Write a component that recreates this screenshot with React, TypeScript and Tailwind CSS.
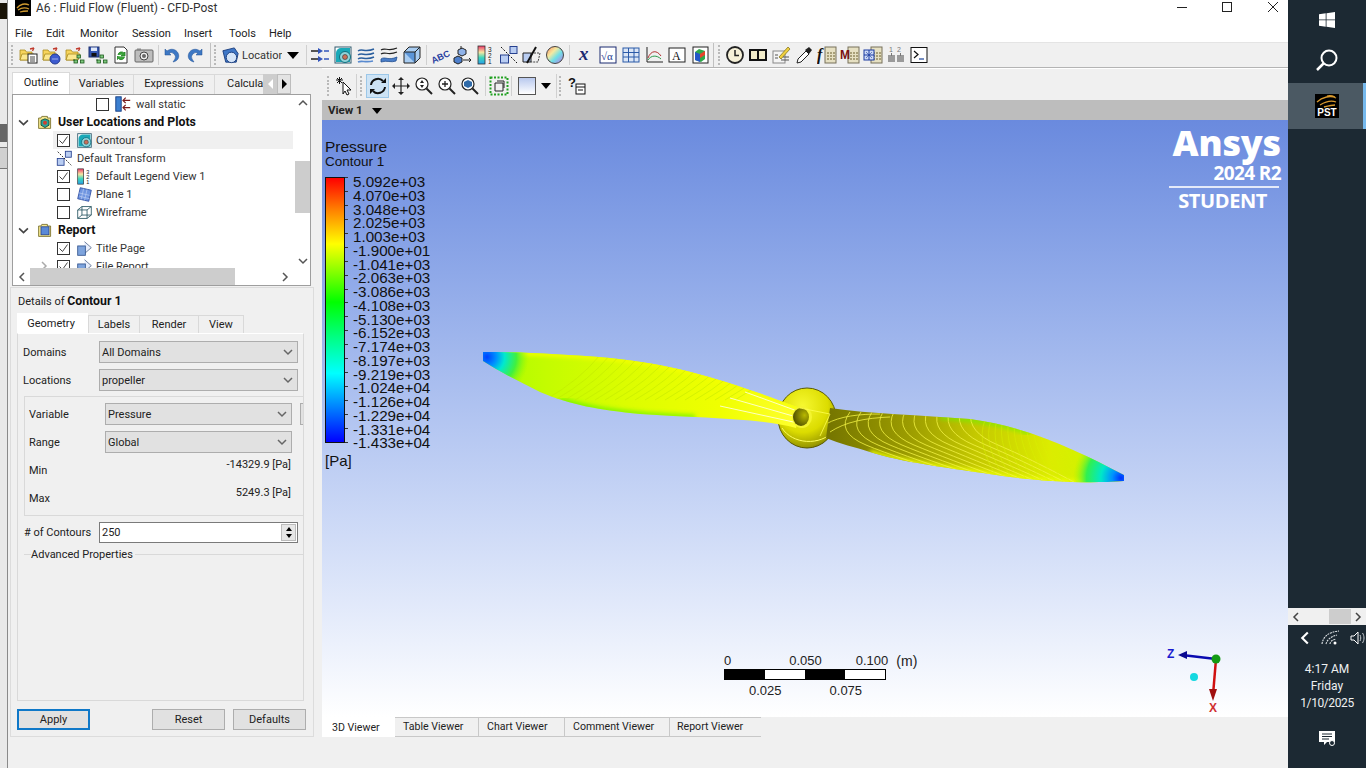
import type { ReactNode } from "react";

const Svg = ({ children, s = 20, c = "" }: { children: ReactNode; s?: number; c?: string }) => (
  <svg width={s} height={s} viewBox="0 0 20 20" className={c}>{children}</svg>
);

// toolbar cell
const T = ({ children }: { children: ReactNode }) => (
  <div className="w-[23px] h-[24px] flex items-center justify-center shrink-0">
    <Svg>{children}</Svg>
  </div>
);

const Grip = () => (
  <div className="w-[3px] h-[22px] flex flex-col justify-between py-[1px] shrink-0">
    {[0, 1, 2, 3, 4, 5].map((i) => <div key={i} className="w-[2px] h-[2px] bg-[#b9b9b9]" />)}
  </div>
);
const Sep = () => <div className="w-[1px] h-[20px] bg-[#d0d0d0] mx-[1px] shrink-0" />;

const Folder = () => (
  <>
    <path d="M1 5h5l1.5 2H13v8H1z" fill="#f7d45c" stroke="#a88a20" strokeWidth=".8" />
    <path d="M1 15l2-6h12l-2 6z" fill="#fce88f" stroke="#a88a20" strokeWidth=".8" />
    <path d="M11 4l4-1M15 3l-1.500 3" stroke="#c0392b" strokeWidth="1.300" fill="none" />
  </>
);
const Nodes = ({ x = 12, y = 10 }: { x?: number; y?: number }) => (
  <g fill="#7fc97f" stroke="#1d5a1d" strokeWidth=".8">
    <rect x={x} y={y} width="3.500" height="3" />
    <rect x={x + 3.500} y={y + 5} width="3.500" height="3" />
    <rect x={x - 3} y={y + 5} width="3.500" height="3" />
    <path d="M9 14v2" fill="none" />
  </g>
);
const Calc = ({ children }: { children: ReactNode }) => (
  <>
    <rect x="8" y="2" width="11" height="16" fill="#e6e0c2" stroke="#77705a" />
    <g fill="#a89f78">
      <rect x="10" y="7" width="2" height="2" /><rect x="13" y="7" width="2" height="2" /><rect x="16" y="7" width="2" height="2" />
      <rect x="10" y="10" width="2" height="2" /><rect x="13" y="10" width="2" height="2" /><rect x="16" y="10" width="2" height="2" />
      <rect x="10" y="13" width="2" height="2" /><rect x="13" y="13" width="2" height="2" /><rect x="16" y="13" width="2" height="2" />
    </g>
    {children}
  </>
);
const ContourIco = () => (
  <>
    <rect x="2" y="2" width="16" height="16" fill="#fff" stroke="#315b6e" />
    <path d="M3 17V8a5 5 0 0 1 5-5h9v14z" fill="#19a9b8" />
    <circle cx="12" cy="12" r="5.500" fill="#8fd3d9" stroke="#0f6f7f" />
    <circle cx="12" cy="12" r="2.500" fill="#c9705a" stroke="#333" strokeWidth=".6" />
  </>
);
const LegendIco = () => (
  <>
    <defs>
      <linearGradient id="lg" x1="0" y1="0" x2="0" y2="1">
        <stop offset="0" stopColor="#f03a6a" /><stop offset=".35" stopColor="#f5e6a2" /><stop offset=".65" stopColor="#3cd6bc" /><stop offset="1" stopColor="#2aa0e8" />
      </linearGradient>
    </defs>
    <rect x="2" y="1" width="7" height="18" fill="url(#lg)" stroke="#333" strokeWidth=".8" />
    <text x="12" y="6.500" fontSize="6.500" fill="#222" fontFamily="Liberation Sans">3</text>
    <text x="12" y="12.500" fontSize="6.500" fill="#222" fontFamily="Liberation Sans">2</text>
    <text x="12" y="18.500" fontSize="6.500" fill="#222" fontFamily="Liberation Sans">1</text>
  </>
);
const TransformIco = () => (
  <>
    <rect x="1.500" y="10" width="8" height="8" fill="#b9cdf2" stroke="#26408f" />
    <rect x="11" y="1.500" width="7" height="7" fill="#b9cdf2" stroke="#26408f" />
    <path d="M2 2l16 16" stroke="#111" strokeDasharray="2 1.500" />
  </>
);
const ReportIco = () => (
  <>
    <path d="M10 2l8 7-8 7" fill="#e8eefc" stroke="#5b6e8f" />
    <rect x="2" y="7" width="9" height="11" fill="#7ea4dd" stroke="#33558f" />
  </>
);
const BookFolder = ({ children }: { children: ReactNode }) => (
  <>
    <path d="M2 5h3l1-2h7v2h4v13H2z" fill="#f5e88e" stroke="#6e6420" />
    {children}
  </>
);
const Mag = ({ children }: { children?: ReactNode }) => (
  <>
    <circle cx="8" cy="8" r="6" fill="#fff" stroke="#222" strokeWidth="1.200" />
    <path d="M12.500 12.500l5.500 5.500" stroke="#222" strokeWidth="2" />
    {children}
  </>
);
const Check = ({ on }: { on?: boolean }) => (
  <div className="w-[13px] h-[13px] border border-[#333] bg-white flex items-center justify-center shrink-0">
    {on && (
      <svg width="11" height="11" viewBox="0 0 11 11">
        <path d="M1.500 5.500l3 3 5-7" fill="none" stroke="#444" strokeWidth="1" />
      </svg>
    )}
  </div>
);
const Chev = ({ d = "down", c = "#555", s = 10 }: { d?: string; c?: string; s?: number }) => (
  <svg width={s} height={s} viewBox="0 0 10 10" className="shrink-0">
    <path
      d={d === "down" ? "M1 3l4 4 4-4" : d === "up" ? "M1 7l4-4 4 4" : d === "left" ? "M7 1L3 5l4 4" : "M3 1l4 4-4 4"}
      fill="none" stroke={c} strokeWidth="1.500"
    />
  </svg>
);
const Tri = ({ c = "" }: { c?: string }) => <div className={`w-0 h-0 border-l-[5px] border-r-[5px] border-t-[6px] border-l-transparent border-r-transparent border-t-black ${c}`} />;

const Select = ({ w, label }: { w: string; label: string }) => (
  <div className={`${w} h-[22px] bg-[#e1e1e1] border border-[#adadad] flex items-center justify-between pl-[2px] pr-[4px] text-[#222]`}>
    <span>{label}</span>
    <Chev c="#666" />
  </div>
);

const Row = ({ pl, children, sel }: { pl: string; children: ReactNode; sel?: boolean }) => (
  <div className={`h-[18px] flex items-center shrink-0 ${pl} ${sel ? "bg-[#f0f0f0]" : ""}`}>{children}</div>
);

const legend = [
  "5.092e+03", "4.070e+03", "3.048e+03", "2.025e+03", "1.003e+03", "-1.900e+01", "-1.041e+03", "-2.063e+03", "-3.086e+03", "-4.108e+03",
  "-5.130e+03", "-6.152e+03", "-7.174e+03", "-8.197e+03", "-9.219e+03", "-1.024e+04", "-1.126e+04", "-1.229e+04", "-1.331e+04", "-1.433e+04",
];

const Propeller = () => {
  const right = "M830 408 C870 414 920 415 970 419 C1030 427 1080 452 1124 475 L1124 481 C1085 484 1040 481 1003 476 C950 468 900 462 870 452 C855 447 840 444 826 438 Z";
  const left = "M483 352 C520 352 560 354 610 358 C680 365 730 382 800 408 L796 428 C760 418 700 418 640 414 C600 410 570 405 540 392 C520 382 500 372 483 361 Z";
  return (
    <svg className="absolute left-0 top-0" width="966" height="597" viewBox="322 120 966 597">
      <defs>
        <linearGradient id="bl" gradientUnits="userSpaceOnUse" x1="483" y1="0" x2="800" y2="0">
          <stop offset="0" stopColor="#a8fb00" /><stop offset=".2" stopColor="#c4fc00" /><stop offset=".45" stopColor="#dcfd00" /><stop offset=".75" stopColor="#f0ff00" /><stop offset="1" stopColor="#ffff30" />
        </linearGradient>
        <linearGradient id="br" gradientUnits="userSpaceOnUse" x1="826" y1="0" x2="1124" y2="0">
          <stop offset="0" stopColor="#747400" /><stop offset=".28" stopColor="#9c9c00" /><stop offset=".5" stopColor="#c4c800" />
          <stop offset=".75" stopColor="#dcec00" /><stop offset="1" stopColor="#c8f800" />
        </linearGradient>
        <radialGradient id="tipL" gradientUnits="userSpaceOnUse" cx="487" cy="357" r="42">
          <stop offset="0" stopColor="#0040ff" /><stop offset=".22" stopColor="#0090ff" /><stop offset=".42" stopColor="#00e8d0" /><stop offset=".7" stopColor="#40f040" /><stop offset="1" stopColor="#90f800" stopOpacity="0" />
        </radialGradient>
        <radialGradient id="tipR" gradientUnits="userSpaceOnUse" cx="1121" cy="478" r="48">
          <stop offset="0" stopColor="#0030ff" /><stop offset=".18" stopColor="#0090ff" /><stop offset=".42" stopColor="#00e8c8" /><stop offset=".72" stopColor="#30f050" /><stop offset="1" stopColor="#a0f800" stopOpacity="0" />
        </radialGradient>
        <radialGradient id="hub" cx=".42" cy=".3" r=".8">
          <stop offset="0" stopColor="#f6f830" /><stop offset=".55" stopColor="#dcdc00" /><stop offset=".85" stopColor="#9a9a00" /><stop offset="1" stopColor="#5c5c00" />
        </radialGradient>
        <radialGradient id="hole" cx=".72" cy=".4" r=".85">
          <stop offset="0" stopColor="#b8b800" /><stop offset="1" stopColor="#3c3c00" />
        </radialGradient>
        <filter id="soft"><feGaussianBlur stdDeviation="2" /></filter>
        <clipPath id="cr"><path d={right} /></clipPath>
        <clipPath id="cl"><path d={left} /></clipPath>
      </defs>
      <ellipse cx="807" cy="418" rx="29" ry="30" fill="url(#hub)" stroke="#5a5a00" strokeWidth="1" />
      <path d="M782 428 C792 444 820 447 835 430" fill="none" stroke="#ffff60" strokeWidth="1" />
      <path d={left} fill="url(#bl)" />
      <g clipPath="url(#cl)">
        {/* green band along the trailing edge, yellow rim on top */}
        <path d="M560 400 C590 409 610 411 640 414 C660 416 675 416 695 417" fill="none" stroke="#40f000" strokeOpacity=".6" strokeWidth="5" filter="url(#soft)" />
        <path d="M483 352 C520 352 560 354 610 358 C680 365 730 382 800 408" fill="none" stroke="#f4ff00" strokeWidth="5" filter="url(#soft)" />
        <g fill="none" stroke="#bce400" strokeWidth=".5">
          {Array.from({ length: 20 }, (_, i) => (
            <path key={i} d={`M${545 + i * 10} 400 Q${580 + i * 10} 380 ${600 + i * 10} 355`} />
          ))}
        </g>
        <path d="M745 392L800 412M730 398L800 418M720 406L798 423" fill="none" stroke="#fffff0" strokeWidth=".8" />
        <rect x="480" y="345" width="50" height="40" fill="url(#tipL)" />
      </g>
      <path d={right} fill="url(#br)" />
      <g clipPath="url(#cr)">
        <path d="M940 417 C970 419 1005 424 1030 433" fill="none" stroke="#70f000" strokeOpacity=".7" strokeWidth="5" filter="url(#soft)" />
        <path d="M1124 481 C1085 484 1040 481 1003 476 C950 468 900 462 870 452" fill="none" stroke="#ecff00" strokeWidth="5" filter="url(#soft)" />
        <g fill="none" stroke="#f2f244" strokeWidth=".8">
          {Array.from({ length: 12 }, (_, i) => (
            <path key={i} d={`M${850 + i * 11} 412 Q${835 + i * 12} 432 ${866 + i * 12} 445 T${975 + i * 9} 482`} />
          ))}
          <path d="M826 424C840 416 860 414 880 414M830 432C845 422 865 418 890 417" />
        </g>
        <g fill="none" stroke="#d8f000" strokeWidth=".5">
          {Array.from({ length: 16 }, (_, i) => (
            <path key={i} d={`M${985 + i * 6} 420 Q${975 + i * 7} 445 ${1000 + i * 7} 482`} />
          ))}
        </g>
        <rect x="1070" y="445" width="56" height="40" fill="url(#tipR)" />
      </g>
      <ellipse cx="802" cy="417" rx="10" ry="11" fill="#f4f430" />
      <ellipse cx="801" cy="417" rx="8" ry="9" fill="url(#hole)" />
      <path d="M800 408l30 6-10 22" fill="none" stroke="#ffff50" strokeWidth=".8" />
    </svg>
  );
};

export default function App() {
  return (
    <div className="w-[1366px] h-[768px] flex overflow-hidden bg-[#f0f0f0] text-[11px] leading-none text-[#222] font-['Roboto',sans-serif]">
      {/* desktop strip behind the window */}
      <div className="w-[7px] flex flex-col bg-[#e9e9e9] border-r border-[#8a8a8a] shrink-0 box-content">
        <div className="h-[3px]" />
        <div className="h-[16px] bg-[#1a1408]" />
        <div className="h-[105px]" />
        <div className="h-[18px] bg-[#666]" />
        <div className="h-[5px]" />
        <div className="h-[22px] bg-[#d0d0d0] border-y border-[#777]" />
      </div>

      {/* CFD-Post window */}
      <div className="w-[1280px] flex flex-col shrink-0">
        {/* title bar */}
        <div className="h-[22px] bg-white flex items-start relative">
          <div className="ml-[7px] w-[16px] h-[16px] bg-black flex items-center justify-center shrink-0">
            <svg width="14" height="12" viewBox="0 0 14 12"><path d="M1 6c3-4 8-5 12-3M2 8c3-2 7-3 11-1M4 10c3-1 6-1 8-1" fill="none" stroke="#d09a30" strokeWidth="1.300" /></svg>
          </div>
          <span className="ml-[5px] mt-[2px] text-[12px] leading-[13px] text-[#333]">A6 : Fluid Flow (Fluent) - CFD-Post</span>
          <svg className="absolute left-[1169px] top-0" width="113" height="14" viewBox="0 0 113 14">
            <path d="M0 7.500h10" stroke="#222" />
            <rect x="45.500" y="2.500" width="9" height="9" fill="none" stroke="#222" />
            <path d="M91 2l10 10M101 2L91 12" stroke="#222" />
          </svg>
        </div>

        {/* menu */}
        <div className="h-[20px] bg-white pl-[7px] flex items-center text-[11px] pt-[2px]">
          <span className="w-[31px]">File</span>
          <span className="w-[34px]">Edit</span>
          <span className="w-[52px]">Monitor</span>
          <span className="w-[52px]">Session</span>
          <span className="w-[45px]">Insert</span>
          <span className="w-[40px]">Tools</span>
          <span>Help</span>
        </div>

        {/* main toolbar */}
        <div className="h-[26px] bg-[#f0f0f0] border-t border-[#e4e4e4] border-b border-b-[#b4b4b4] flex items-center pl-[3px] shrink-0">
          <Grip />
          <div className="w-[3px]" />
          <T><Folder /><rect x="9" y="9" width="9" height="9" fill="#fff" stroke="#222" /><path d="M11 12h5M11 14h5M11 16h5" stroke="#444" /></T>
          <T><Folder /><circle cx="13" cy="14" r="5" fill="#3d5bd0" stroke="#223a90" /><path d="M10.500 14h1M12.500 14h1M14.500 14h1" stroke="#fff" /></T>
          <T><Folder /><Nodes /></T>
          <T><rect x="1" y="2" width="10" height="10" fill="#3557b0" stroke="#1b2f70" /><rect x="3" y="2.500" width="6" height="3.500" fill="#dfe8f8" /><rect x="3.500" y="8" width="5" height="3.500" fill="#111" /><Nodes /></T>
          <T><path d="M4 2h9l3 3v13H4z" fill="#fff" stroke="#333" /><path d="M7 10a3.500 3.500 0 0 1 6-2l1-1v4h-4l1.500-1.200M13.500 12a3.500 3.500 0 0 1-6 1.500l-1 1v-3.500" fill="#3aa53a" stroke="#1e7d1e" strokeWidth=".8" /></T>
          <T><rect x="1" y="5" width="18" height="12" rx="1" fill="#bdbdbd" stroke="#666" /><circle cx="10" cy="11" r="4" fill="#eee" stroke="#444" /><circle cx="10" cy="11" r="2" fill="#666" /><rect x="3" y="3.500" width="4" height="2" fill="#888" /></T>
          <div className="w-[2px]" />
          <Sep />
          <div className="w-[2px]" />
          <T><path transform="translate(-3 0)" d="M4 4v6h6L8 8a4.500 4.500 0 0 1 6 6l-2 3c5-1 7-5 5-9-2-4-7-5-11-2z" fill="#3d78c4" stroke="#1f4f92" strokeWidth=".5" /></T>
          <T><path transform="translate(-1 0)" d="M16 4v6h-6l2-2a4.500 4.500 0 0 0-6 6l2 3c-5-1-7-5-5-9 2-4 7-5 11-2z" fill="#3d78c4" stroke="#1f4f92" strokeWidth=".5" /></T>
          <div className="w-[1px] h-[24px] bg-[#c0c0c0] ml-[2px] mr-[3px]" />
          <Grip />
          <div className="ml-[3px] w-[20px] h-[24px] flex items-center justify-center shrink-0">
            <Svg s={19}><path d="M2 5l12-3 4 6-2 9H5z" fill="#3f78c8" stroke="#1c3f80" /><circle cx="11" cy="12" r="5.500" fill="#d4e4f8" stroke="#1c3f80" /></Svg>
          </div>
          <span className="ml-[2px] w-[40px] overflow-hidden whitespace-nowrap text-[#333]">Location</span>
          <Tri c="ml-[5px] !border-l-[6px] !border-r-[6px] !border-t-[7px]" />
          <div className="w-[6px]" />
          <Sep />
          <T><path d="M1 6h8M1 14h8" stroke="#222" strokeWidth="1.300" /><path d="M8 3l5 3-5 3zM8 11l5 3-5 3z" fill="#3355bb" /><path d="M14 6h5M14 14h5" stroke="#3355bb" strokeWidth="1.300" /></T>
          <T><ContourIco /></T>
          <T><path d="M2 6c4-3 7 2 16-2M2 10c4-3 7 2 16-2M2 14c4-3 7 2 16-2" fill="none" stroke="#2b5f9e" strokeWidth="1.400" /><path d="M2 17c4-2 7 1 15-1" fill="none" stroke="#5a8bd0" strokeWidth="1.600" /></T>
          <T><path d="M2 5c4-3 7 2 16-2M2 9c4-3 7 2 16-2" fill="none" stroke="#222" strokeWidth="1.200" /><path d="M2 14c4-3 7 2 16-2l-1 4c-5 2-9-1-15 1z" fill="#4a7ec8" stroke="#224f90" strokeWidth=".8" /></T>
          <T><path d="M2 7l5-5h11v11l-5 5H2z" fill="#a9cdf2" stroke="#222" /><path d="M2 7h11v11M13 7l5-5" fill="#5b95d8" stroke="#222" /></T>
          <div className="w-[2px]" />
          <Sep />
          <T><text x="0" y="15" fontSize="9" fontWeight="700" fill="#2940a0" fontFamily="Liberation Sans" transform="rotate(-24 10 10)">ABC</text></T>
          <T><path d="M5 5l4-2 4 2v4l-4 2-4-2z" fill="#8fb2e8" stroke="#222" /><path d="M1 13l4-2 4 2v4l-4 2-4-2z" fill="#4f80cc" stroke="#222" /><path d="M10 15h8M16 13l2 2-2 2M8 1v3" stroke="#222" fill="none" /></T>
          <T><LegendIco /></T>
          <T><TransformIco /></T>
          <T><path d="M1 8h8v9H1z" fill="#b9cdf2" stroke="#222" /><path d="M9 8h9l-2 9H9" fill="none" stroke="#444" strokeDasharray="2 1" /><path d="M5 18L14 2" stroke="#111" strokeWidth="2" /></T>
          <T><defs><linearGradient id="wh" x1="0" y1="0" x2="1" y2="1"><stop offset="0" stopColor="#ff8a5c" /><stop offset=".35" stopColor="#f5e9a0" /><stop offset=".6" stopColor="#6fe0e8" /><stop offset="1" stopColor="#c070e0" /></linearGradient></defs><circle cx="10" cy="10" r="8.500" fill="url(#wh)" stroke="#444" /></T>
          <div className="w-[2px]" />
          <Sep />
          <div className="w-[2px]" />
          <T><text x="4" y="15" fontSize="19" fontStyle="italic" fontWeight="700" fill="#1a2a70" fontFamily="Liberation Serif">x</text></T>
          <T><rect x="2" y="2" width="16" height="16" fill="#fff" stroke="#1a2a70" /><text x="3" y="15" fontSize="11" fill="#1a3a90" fontFamily="Liberation Serif">√α</text></T>
          <T><rect x="2" y="3" width="16" height="14" fill="#dbe6f6" stroke="#2b5aa8" /><path d="M2 7.500h16M2 12h16M7.500 3v14M13 3v14" stroke="#2b5aa8" /></T>
          <T><path d="M3 2v15h16" fill="none" stroke="#222" /><path d="M4 13c3-8 9-8 13-2" fill="none" stroke="#b03030" /><path d="M4 15c3-5 9-5 13-1" fill="none" stroke="#2a9a4a" /></T>
          <T><rect x="2" y="3" width="16" height="14" fill="#fff" stroke="#222" /><text x="5" y="15" fontSize="12" fontFamily="Liberation Serif" fill="#111">A</text></T>
          <T><rect x="3" y="2" width="15" height="16" fill="#fff" stroke="#222" /><path d="M5 7l4-3 6 2v8l-4 3-6-2z" fill="#2ea84a" /><path d="M5 7l5 2v8l-5-2z" fill="#2356c8" /><path d="M10 9l5-3v4l-5 3z" fill="#e8442a" /></T>
          <div className="w-[1px] h-[24px] bg-[#c0c0c0] ml-[2px] mr-[4px]" />
          <Grip />
          <div className="w-[2px]" />
          <T><circle cx="10" cy="10" r="8" fill="#f5f0d8" stroke="#222" strokeWidth="1.800" /><path d="M10 5v5.500h4" fill="none" stroke="#222" strokeWidth="1.500" /></T>
          <T><rect x="1" y="4" width="18" height="12" fill="#111" /><rect x="3" y="6" width="6" height="8" fill="#f2ecca" /><rect x="11" y="6" width="6" height="8" fill="#f2ecca" /></T>
          <T><rect x="2" y="6" width="12" height="12" fill="#f4f4f4" stroke="#888" /><path d="M8 12L17 2l2 2-9 10z" fill="#f0d040" stroke="#7a6a10" strokeWidth=".7" /><path d="M10 15h8M12 12h6M4 10h3M4 13h3" stroke="#555" /></T>
          <T><path d="M3 18l1-4 8-8 3 3-8 8z" fill="#fff" stroke="#222" /><path d="M11 5l4-3 3 3-3 4z" fill="#222" /></T>
          <T><Calc><text x="0" y="15" fontSize="16" fontWeight="700" fontStyle="italic" fontFamily="Liberation Serif" fill="#111">f</text></Calc></T>
          <T><Calc><text x="0" y="14" fontSize="12" fontWeight="700" fontFamily="Liberation Sans" fill="#7a1010">M</text></Calc></T>
          <T><Calc><rect x="1" y="5" width="10" height="10" fill="#cdd9f5" stroke="#1a3aa0" /><path d="M1 10h10M6 5v10" stroke="#1a3aa0" /><path d="M3 7l6 6M9 7l-6 6" stroke="#1a3aa0" strokeWidth=".6" /></Calc></T>
          <T><text x="3" y="7" fontSize="7" fill="#777" fontFamily="Liberation Sans">1</text><text x="11" y="7" fontSize="7" fill="#777" fontFamily="Liberation Sans">2</text><path d="M2 10h7v7H2zM11 10h7v7h-7z" fill="#9a9a9a" /><path d="M5.500 8v3M14.500 8v3" stroke="#777" /></T>
          <T><rect x="2" y="2.500" width="16" height="15" fill="#fff" stroke="#111" /><path d="M5 6l4 3.500-4 3.500" fill="none" stroke="#111" strokeWidth="1.200" /><path d="M10 14h5" stroke="#2a50a0" strokeWidth="1.300" /></T>
        </div>

        {/* panels */}
        <div className="flex-1 flex min-h-0">
          {/* left column */}
          <div className="w-[304px] ml-[2px] flex flex-col shrink-0">
            <div className="h-[4px]" />
            {/* outline tabs */}
            <div className="h-[22px] ml-[2px] flex items-end shrink-0 relative">
              <div className="w-[58px] h-[22px] pb-[2px] bg-white border border-[#d9d9d9] border-b-0 flex items-center justify-center">Outline</div>
              <div className="w-[64px] h-[20px] pb-[2px] bg-[#f0f0f0] border-t border-r border-[#d9d9d9] flex items-center justify-center">Variables</div>
              <div className="w-[81px] h-[20px] pb-[2px] bg-[#f0f0f0] border-t border-r border-[#d9d9d9] flex items-center justify-center">Expressions</div>
              <div className="w-[48px] h-[20px] pb-[2px] bg-[#f0f0f0] border-t border-[#d9d9d9] pl-[12px] flex items-center overflow-hidden whitespace-nowrap">Calcula</div>
              <div className="flex h-[20px] shrink-0">
                <div className="w-[14px] bg-[#cdcdcd] flex items-center justify-center"><div className="w-0 h-0 border-y-[5px] border-r-[5px] border-y-transparent border-r-white" /></div>
                <div className="w-[14px] bg-[#e3e3e3] border border-[#bdbdbd] flex items-center justify-center"><div className="w-0 h-0 border-y-[5px] border-l-[5px] border-y-transparent border-l-black" /></div>
              </div>
            </div>

            {/* outline tree */}
            <div className="h-[192px] ml-[2px] w-[299px] border border-[#9e9e9e] bg-white flex flex-col shrink-0">
              <div className="flex h-[173px] shrink-0">
                <div className="w-[282px] overflow-hidden flex flex-col shrink-0">
                  <Row pl="pl-[83px]"><Check /><Svg s={18} c="ml-[5px]"><rect x="2" y="2" width="6" height="16" fill="#3b7fd0" stroke="#123a80" /><path d="M10 6h8M10 14h8M13 3l-3 3 3 3M13 11l-3 3 3 3" fill="none" stroke="#7a1a1a" strokeWidth="1.300" /></Svg><span className="ml-[4px] text-[#333]">wall static</span></Row>
                  <Row pl="pl-[5px]"><Chev s={11} c="#444" /><Svg s={16} c="ml-[8px]"><BookFolder><path d="M5 8l5-2 5 2v6l-5 3-5-3z" fill="#2aa59a" stroke="#0c3c30" /><circle cx="10" cy="11" r="2.500" fill="#d04030" /></BookFolder></Svg><span className="ml-[5px] text-[12.300px] font-bold text-[#111]">User Locations and Plots</span></Row>
                  <div className="ml-[40px] mr-[2px] flex flex-col">
                    <Row pl="pl-[4px]" sel><Check on /><Svg s={17} c="ml-[6px]"><ContourIco /></Svg><span className="ml-[3px] text-[#333]">Contour 1</span></Row>
                    <Row pl="pl-[3px]"><Svg s={17}><TransformIco /></Svg><span className="ml-[4px] text-[#333]">Default Transform</span></Row>
                    <Row pl="pl-[4px]"><Check on /><Svg s={17} c="ml-[6px]"><LegendIco /></Svg><span className="ml-[3px] text-[#333]">Default Legend View 1</span></Row>
                    <Row pl="pl-[4px]"><Check /><Svg s={17} c="ml-[6px]"><path d="M5 2l13 3-3 13L2 15z" fill="#6f95e0" stroke="#2a4aa0" /><path d="M3 8l13 3M4 12l12 3M9 3l-3 13M13 4l-3 13" stroke="#c5d4f5" strokeWidth=".7" /></Svg><span className="ml-[3px] text-[#333]">Plane 1</span></Row>
                    <Row pl="pl-[4px]"><Check /><Svg s={17} c="ml-[6px]"><path d="M2 7h11v10H2zM7 3h11v10H7zM2 7l5-4M13 7l5-4M2 17l5-4M13 17l5-4" fill="none" stroke="#275561" /></Svg><span className="ml-[3px] text-[#333]">Wireframe</span></Row>
                  </div>
                  <Row pl="pl-[5px]"><Chev s={11} c="#444" /><Svg s={16} c="ml-[8px]"><BookFolder><rect x="5" y="6" width="10" height="10" fill="#5a8ad8" stroke="#243f90" /></BookFolder></Svg><span className="ml-[5px] text-[12.300px] font-bold text-[#111]">Report</span></Row>
                  <div className="ml-[40px] flex flex-col">
                    <Row pl="pl-[4px]"><Check on /><Svg s={17} c="ml-[6px]"><ReportIco /></Svg><span className="ml-[3px] text-[#333]">Title Page</span></Row>
                    <Row pl="pl-[4px] relative"><div className="absolute left-[-14px]"><Chev c="#aaa" d="right" /></div><Check on /><Svg s={17} c="ml-[6px]"><ReportIco /></Svg><span className="ml-[3px] text-[#333]">File Report</span></Row>
                  </div>
                </div>
                <div className="w-[15px] flex flex-col items-center shrink-0 bg-white">
                  <div className="h-[15px] flex items-center justify-center"><Chev c="#555" d="up" /></div>
                  <div className="h-[51px]" />
                  <div className="w-[15px] h-[52px] bg-[#cdcdcd]" />
                  <div className="flex-1" />
                  <div className="h-[15px] flex items-center justify-center"><Chev c="#555" /></div>
                </div>
              </div>
              <div className="h-[17px] flex items-center bg-white shrink-0">
                <div className="w-[17px] flex justify-center"><Chev d="left" c="#555" /></div>
                <div className="w-[205px] h-[17px] bg-[#cdcdcd]" />
                <div className="w-[56px] flex justify-center pl-[44px]"><Chev d="right" c="#555" /></div>
              </div>
            </div>

            {/* details */}
            <div className="mt-[1px] h-[450px] border border-[#dcdcdc] flex flex-col shrink-0">
              <div className="h-[25px] pl-[7px] pt-[7px] shrink-0">Details of <span className="text-[12.300px] font-bold text-[#111]">Contour 1</span></div>
              <div className="h-[20px] pl-[6px] flex items-end shrink-0">
                <div className="w-[71px] h-[20px] bg-white pr-[3px] flex items-center justify-center">Geometry</div>
                <div className="w-[52px] h-[18px] border-t border-r border-l border-[#d9d9d9] flex items-center justify-center">Labels</div>
                <div className="w-[59px] h-[18px] border-t border-r border-[#d9d9d9] flex items-center justify-center">Render</div>
                <div className="w-[45px] h-[18px] border-t border-r border-[#d9d9d9] flex items-center justify-center">View</div>
              </div>
              <div className="mx-[6px] w-[287px] h-[368px] border border-[#d9d9d9] border-t-white bg-[#f0f0f0] flex flex-col shrink-0 overflow-hidden">
                <div className="h-[7px] shrink-0" />
                <div className="flex items-center h-[22px] pl-[5px] shrink-0"><span className="w-[76px]">Domains</span><Select w="w-[199px]" label="All Domains" /></div>
                <div className="h-[6px] shrink-0" />
                <div className="flex items-center h-[22px] pl-[5px] shrink-0"><span className="w-[76px]">Locations</span><Select w="w-[199px]" label="propeller" /></div>
                <div className="h-[5px] shrink-0" />
                <div className="ml-[6px] w-[290px] h-[120px] border border-[#d9d9d9] pl-[4px] pt-[6px] flex flex-col shrink-0">
                  <div className="flex items-center h-[22px]"><span className="w-[76px]">Variable</span><Select w="w-[187px]" label="Pressure" /><div className="ml-[8px] w-[10px] h-[22px] bg-[#e1e1e1] border border-[#adadad]" /></div>
                  <div className="h-[6px]" />
                  <div className="flex items-center h-[22px]"><span className="w-[76px]">Range</span><Select w="w-[187px]" label="Global" /></div>
                  <div className="flex h-[28px] w-[262px] justify-between"><span className="mt-[12px]">Min</span><span className="mt-[6px]">-14329.9 [Pa]</span></div>
                  <div className="flex h-[28px] w-[262px] justify-between"><span className="mt-[12px]">Max</span><span className="mt-[6px]">5249.3 [Pa]</span></div>
                </div>
                <div className="h-[6px] shrink-0" />
                <div className="flex items-center h-[21px] pl-[6px] shrink-0">
                  <span className="w-[75px] whitespace-nowrap">{"# of Contours"}</span>
                  <div className="w-[199px] h-[21px] bg-white border border-[#7a7a7a] flex items-center justify-between pl-[2px] pr-[1px]">
                    <span>250</span>
                    <div className="w-[15px] h-[17px] flex flex-col border border-[#bbb] bg-[#e6e6e6] items-center justify-around">
                      <div className="w-0 h-0 border-x-[3px] border-b-[4px] border-x-transparent border-b-black" />
                      <div className="w-0 h-0 border-x-[3px] border-t-[4px] border-x-transparent border-t-black" />
                    </div>
                  </div>
                </div>
                <div className="ml-[6px] mt-[5px] w-[290px] h-[13px] flex items-center shrink-0">
                  <div className="w-[7px] h-[1px] bg-[#d9d9d9]" />
                  <span className="whitespace-nowrap">Advanced Properties</span>
                  <div className="flex-1 h-[1px] bg-[#d9d9d9] ml-[2px]" />
                </div>
              </div>
              <div className="h-[8px] shrink-0" />
              <div className="h-[21px] flex pl-[6px] shrink-0">
                <div className="w-[73px] h-[21px] bg-[#e1e1e1] border-2 border-[#0f78c8] flex items-center justify-center">Apply</div>
                <div className="ml-[62px] w-[73px] h-[21px] bg-[#e1e1e1] border border-[#adadad] flex items-center justify-center">Reset</div>
                <div className="ml-[8px] w-[73px] h-[21px] bg-[#e1e1e1] border border-[#adadad] flex items-center justify-center">Defaults</div>
              </div>
            </div>
          </div>

          {/* right column */}
          <div className="ml-[8px] w-[966px] flex flex-col shrink-0">
            <div className="h-[32px] pt-[3px] border-t-[1px] border-white flex items-center pl-[5px] shrink-0">
              <Grip />
              <div className="ml-[2px]">
                <T><path d="M9 6l8 8-4 0 2 4-2 1-2-4-2 3z" fill="#fff" stroke="#111" /><path d="M2 4h7M5.500 1v7M3 2l5 5M8 2L3 7" stroke="#111" strokeWidth="1" /></T>
              </div>
              <div className="w-[1px] h-[24px] bg-[#d0d0d0] ml-[1px]" />
              <div className="w-[3px]" />
              <Grip />
              <div className="w-[3px]" />
              <div className="w-[23px] h-[24px] bg-[#cde3f5] border border-[#9cc7e8] flex items-center justify-center shrink-0">
                <Svg><path d="M3 9a7 7 0 0 1 12-4" fill="none" stroke="#111" strokeWidth="2" /><path d="M17 11a7 7 0 0 1-12 4" fill="none" stroke="#111" strokeWidth="2" /><path d="M13 7l5 0 0-5zM7 13l-5 0 0 5z" fill="#111" /></Svg>
              </div>
              <T><path d="M10 2v16M2 10h16" stroke="#222" strokeWidth="1.200" /><path d="M10 1l-3 3h6zM10 19l-3-3h6zM1 10l3-3v6zM19 10l-3-3v6z" fill="#222" /></T>
              <T><Mag><path d="M8 4l-2 3h4zM8 12l-2-3h4z" fill="#222" /></Mag></T>
              <T><Mag><path d="M8 5v6M5 8h6" stroke="#222" strokeWidth="1.300" /></Mag></T>
              <T><Mag><path d="M4 6l4-2 4 2v4l-4 2-4-2z" fill="#2f6aa8" /></Mag></T>
              <div className="w-[3px]" />
              <Sep />
              <T><path d="M6 7h8v8H6zM8 5h7v7" fill="none" stroke="#222" /><rect x="1.500" y="1.500" width="17" height="17" fill="none" stroke="#22a022" strokeWidth="2" strokeDasharray="2 1.500" /></T>
              <Sep />
              <div className="w-[5px]" />
              <div className="w-[18px] h-[18px] border border-[#555] bg-gradient-to-b from-[#b9c9ee] to-white shrink-0" />
              <Tri c="ml-[5px] !border-l-[5px] !border-r-[5px]" />
              <div className="w-[5px]" />
              <div className="w-[1px] h-[24px] bg-[#d0d0d0]" />
              <div className="w-[2px]" />
              <Grip />
              <div className="w-[3px]" />
              <T><text x="1" y="11" fontSize="13" fontWeight="700" fill="#111" fontFamily="Liberation Sans">?</text><rect x="9" y="8" width="9" height="10" fill="#fff" stroke="#111" /><path d="M9 11h9M11 14h5" stroke="#111" /></T>
            </div>
            <div className="h-[20px] bg-[#bdbdbd] flex items-center pl-[6px] pt-[1px] font-bold text-[#222] shrink-0">
              <span className="text-[11.500px]">View 1</span>
              <Tri c="ml-[9px]" />
            </div>

            {/* 3D view */}
            <div className="h-[597px] relative overflow-hidden bg-gradient-to-b from-[#6a8ade] to-white shrink-0">
              <Propeller />
              {/* legend */}
              <div className="absolute left-[3px] top-[20px] flex flex-col font-['Liberation_Sans',sans-serif] text-[#111]">
                <span className="text-[15.500px] leading-[14px]">Pressure</span>
                <span className="text-[13.500px] leading-[14px] pt-[1px]">Contour 1</span>
                <div className="flex mt-[8px]">
                  <div className="w-[20px] h-[266px] border border-[#111] bg-[linear-gradient(to_bottom,#ff0000_0%,#ff8000_12%,#ffff00_25%,#80ff00_36%,#00ff00_47%,#00ff80_60%,#00ffff_74%,#0080ff_87%,#0000ff_100%)]" />
                  <div className="w-[3px] h-[266px] flex flex-col justify-between">
                    {legend.map((v) => <div key={v} className="h-[1px] w-[3px] bg-[#333]" />)}
                  </div>
                  <div className="ml-[5px] -mt-[2px] flex flex-col">
                    {legend.map((v) => <span key={v} className="h-[13.760px] text-[15.200px] leading-[13.760px] whitespace-nowrap">{v}</span>)}
                  </div>
                </div>
                <span className="mt-[3px] text-[15px] leading-[16px]">[Pa]</span>
              </div>
              {/* logo */}
              <div className="absolute left-[847px] top-[3px] w-[112px] flex flex-col items-end text-white font-['Open_Sans',sans-serif] font-bold">
                <span className="text-[36px] leading-[40px] tracking-[-0.2px] font-extrabold">Ansys</span>
                <span className="text-[19px] leading-[20px] tracking-[-0.6px]">2024 R2</span>
                <div className="w-[110px] h-[2px] bg-white/80 mt-[3px] mr-[2px]" />
                <span className="text-[20px] leading-[20px] mt-[3px] mr-[14px] tracking-[-0.4px]">STUDENT</span>
              </div>
              {/* scale */}
              <div className="absolute left-[402px] top-[534px] w-[200px] flex flex-col font-['Liberation_Sans',sans-serif] text-[13px] text-[#222]">
                <div className="h-[14px] flex leading-[14px] relative">
                  <span>0</span><span className="ml-[58px]">0.050</span><span className="ml-[34px]">0.100</span><span className="ml-[8px] text-[14px]">(m)</span>
                </div>
                <div className="mt-[1px] w-[162px] h-[11px] border border-black flex">
                  <div className="w-[40px] bg-black" /><div className="w-[40px] bg-white" /><div className="w-[40px] bg-black" /><div className="w-[40px] bg-white" />
                </div>
                <div className="mt-[4px] pl-[25px] h-[14px] flex leading-[14px]"><span>0.025</span><span className="ml-[48px]">0.075</span></div>
              </div>
              {/* axis triad */}
              <svg className="absolute left-[840px] top-[525px]" width="70" height="70" viewBox="0 0 70 70">
                <path d="M54 14L20 10" stroke="#0a0ab0" strokeWidth="2.500" />
                <path d="M16 10l9-4 0 8z" fill="#0a0a90" />
                <path d="M54 14L51 50" stroke="#d01010" strokeWidth="2.500" />
                <path d="M51 56l-4-12h8z" fill="#a01010" />
                <circle cx="54" cy="14" r="4.500" fill="#139a13" />
                <circle cx="32" cy="32" r="4" fill="#14d8e0" />
                <text x="5" y="13" fontSize="12" fontWeight="700" fill="#1a1ad0" fontFamily="Liberation Sans">Z</text>
                <text x="47" y="67" fontSize="12" fontWeight="700" fill="#d03030" fontFamily="Liberation Sans">X</text>
              </svg>
            </div>

            {/* viewer tabs */}
            <div className="h-[21px] flex items-start text-[10.600px] shrink-0">
              <div className="w-[73px] h-[20px] bg-white flex items-center pl-[10px] pt-[3px]">3D Viewer</div>
              <div className="w-[84px] h-[20px] border-t border-b border-r border-[#c8c8c8] flex items-center pl-[8px]">Table Viewer</div>
              <div className="w-[86px] h-[20px] border-t border-b border-r border-[#c8c8c8] flex items-center pl-[8px]">Chart Viewer</div>
              <div className="w-[105px] h-[20px] border-t border-b border-r border-[#c8c8c8] flex items-center pl-[8px]">Comment Viewer</div>
              <div className="w-[91px] h-[20px] border-t border-b border-[#c8c8c8] flex items-center pl-[7px]">Report Viewer</div>
            </div>
          </div>
        </div>
      </div>

      {/* windows taskbar */}
      <div className="w-[78px] h-[768px] bg-[#1c2933] flex flex-col items-center text-white shrink-0">
        <div className="h-[40px] flex items-center justify-center shrink-0">
          <svg width="16" height="16" viewBox="0 0 16 16"><path d="M0 2.300L6.700 1.300V7.500H0zM7.500 1.200L16 0V7.500H7.500zM0 8.300H6.700V14.700L0 13.700zM7.500 8.300H16V16L7.500 14.800z" fill="#fff" /></svg>
        </div>
        <div className="h-[43px] flex items-start justify-center pt-[8px] shrink-0">
          <svg width="24" height="24" viewBox="0 0 24 24"><circle cx="14" cy="10" r="7.500" fill="none" stroke="#fff" strokeWidth="2" /><path d="M8.500 15.500L2 22" stroke="#fff" strokeWidth="2.500" /></svg>
        </div>
        <div className="w-[78px] h-[46px] bg-[#4b5963] border-r-[3px] border-[#76b9ed] flex items-center justify-center pl-[3px] shrink-0">
          <div className="w-[24px] h-[24px] bg-black flex flex-col items-center justify-between overflow-hidden">
            <svg width="24" height="14" viewBox="0 0 24 14"><path d="M2 8c5-5 14-7 19-4M5 11c5-3 11-5 16-3M9 13c4-1 8-2 11-2M12 2c3-1 6 0 8 1" fill="none" stroke="#d99a2e" strokeWidth="1.300" /></svg>
            <span className="text-[10px] leading-[10px] font-bold font-['Liberation_Sans',sans-serif]">PST</span>
          </div>
        </div>
        <div className="flex-1" />
        <div className="w-[78px] h-[17px] bg-[#f0f0f0] flex items-center justify-between px-[3px] shrink-0">
          <Chev d="left" c="#444" />
          <div className="ml-[25px] w-[22px] h-[15px] bg-[#cdcdcd]" />
          <Chev d="right" c="#444" />
        </div>
        <div className="h-[25px] w-[78px] flex items-center pl-[10px] gap-[9px] shrink-0">
          <Chev d="left" c="#fff" s={14} />
          <svg width="20" height="16" viewBox="0 0 20 16"><path d="M1 14C2 7 7 2 18 1M5 14c1-4 4-7 11-9M9 14c0-2 2-4 6-5" fill="none" stroke="#dfe3e6" strokeWidth="1.100" strokeDasharray="2 .8" /><circle cx="14" cy="13" r="1.500" fill="#fff" /></svg>
          <svg width="16" height="16" viewBox="0 0 16 16"><path d="M1 6h3l4-4v12l-4-4H1z" fill="none" stroke="#fff" /><path d="M10 5c1 2 1 4 0 6M12.500 3c2 3 2 7 0 10" fill="none" stroke="#c9ced2" /></svg>
        </div>
        <div className="mt-[11px] h-[50px] flex flex-col items-center justify-between text-[12px] leading-[16px] text-[#eef0f1] shrink-0">
          <span>4:17 AM</span>
          <span>Friday</span>
          <span className="tracking-[-0.4px]">1/10/2025</span>
        </div>
        <div className="h-[57px] flex items-start justify-center pt-[19px] shrink-0">
          <svg width="17" height="17" viewBox="0 0 17 17"><path d="M0 1h16v11H8l-3 3v-3H0z" fill="#fff" /><path d="M3 4h10M3 6.500h10M3 9h7" stroke="#1c2933" /><circle cx="13" cy="13" r="2.500" fill="#1c2933" stroke="#fff" /></svg>
        </div>
      </div>
    </div>
  );
}
